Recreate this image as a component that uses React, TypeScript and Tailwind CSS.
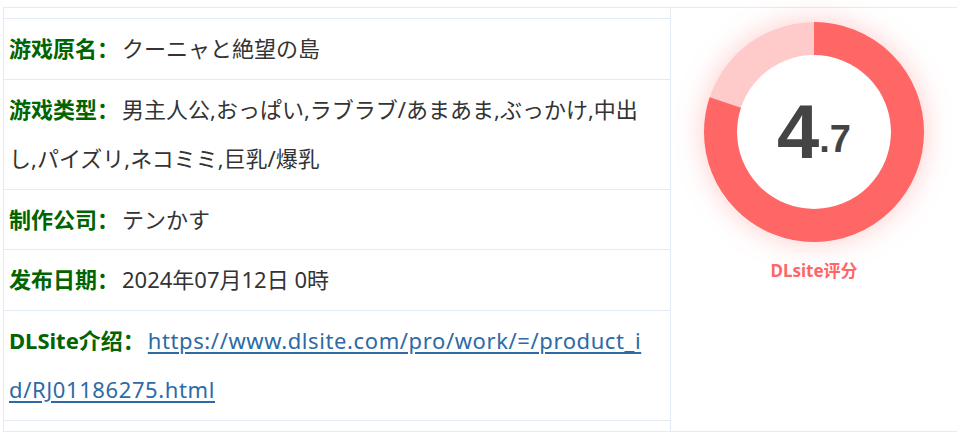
import React from 'react';

interface InfoRow {
    label: string;
    value: string;
    link?: boolean;
}

const rows: InfoRow[] = [
    { label: '游戏原名：', value: 'クーニャと絶望の島' },
    { label: '游戏类型：', value: '男主人公,おっぱい,ラブラブ/あまあま,ぶっかけ,中出し,パイズリ,ネコミミ,巨乳/爆乳' },
    { label: '制作公司：', value: 'テンかす' },
    { label: '发布日期：', value: '2024年07月12日 0時' },
    { label: 'DLSite介绍：', value: 'https://www.dlsite.com/pro/work/=/product_id/RJ01186275.html', link: true },
];

const RatingRing: React.FC<{ score: number; percent: number }> = ({ score, percent }) => {
    const r = 93.5;
    const c = 2 * Math.PI * r;
    const [whole, frac] = score.toFixed(1).split('.');

    return (
        <div className="relative w-[220px] h-[220px] rounded-full shadow-[0_0_28px_rgba(255,102,102,0.35)]">
            <svg width="220" height="220" viewBox="0 0 220 220" className="-rotate-90">
                <circle cx="110" cy="110" r={r} fill="none" stroke="#ffcaca" strokeWidth="33" />
                <circle
                    cx="110"
                    cy="110"
                    r={r}
                    fill="none"
                    stroke="#ff6666"
                    strokeWidth="33"
                    strokeDasharray={`${c * percent} ${c}`}
                />
            </svg>
            <div className="absolute inset-0 flex items-center justify-center font-['Liberation_Sans',Arial,sans-serif] font-bold text-[#444444]">
                <span className="text-[76px] leading-none">{whole}</span>
                <span className="text-[38px] leading-none mt-[14px]">.{frac}</span>
            </div>
        </div>
    );
};

export default function App() {
    return (
        <div className="w-full h-[447px] overflow-hidden bg-white pt-[7px] pl-[3px] font-['Noto_Sans','Noto_Sans_CJK_SC',sans-serif]">
            <div className="flex w-[980px] border border-[#e3ecf4]">
                {/* Info table */}
                <div className="w-[667px] py-[10px] border-r border-[#e3ecf4]">
                    <div className="border-b border-[#e3ecf4]">
                        {rows.map((row, i) => (
                            <div
                                key={row.label}
                                className={`border-t border-[#e3ecf4] pl-[5px] pr-[18px] pt-[5px] text-[22px] leading-[49px] text-[#333333] ${i === 2 ? 'pb-[5px]' : 'pb-[6px]'}`}
                            >
                                <b className="text-[#006400] font-bold">{row.label}</b>
                                {row.link ? (
                                    <a href="#" className="ml-[3px] text-[#2d6aa6] underline underline-offset-[3px] tracking-[0.6px] break-all">
                                        {row.value}
                                    </a>
                                ) : (
                                    <span className="ml-[3px]">{row.value}</span>
                                )}
                            </div>
                        ))}
                    </div>
                </div>

                {/* Rating */}
                <div className="w-[286px] flex flex-col items-center pt-[14px]">
                    <RatingRing score={4.7} percent={0.8} />
                    <p className="mt-[16px] text-[17px] font-bold text-[#ff6666]">
                        DLsite评分
                    </p>
                </div>
            </div>
        </div>
    );
}
